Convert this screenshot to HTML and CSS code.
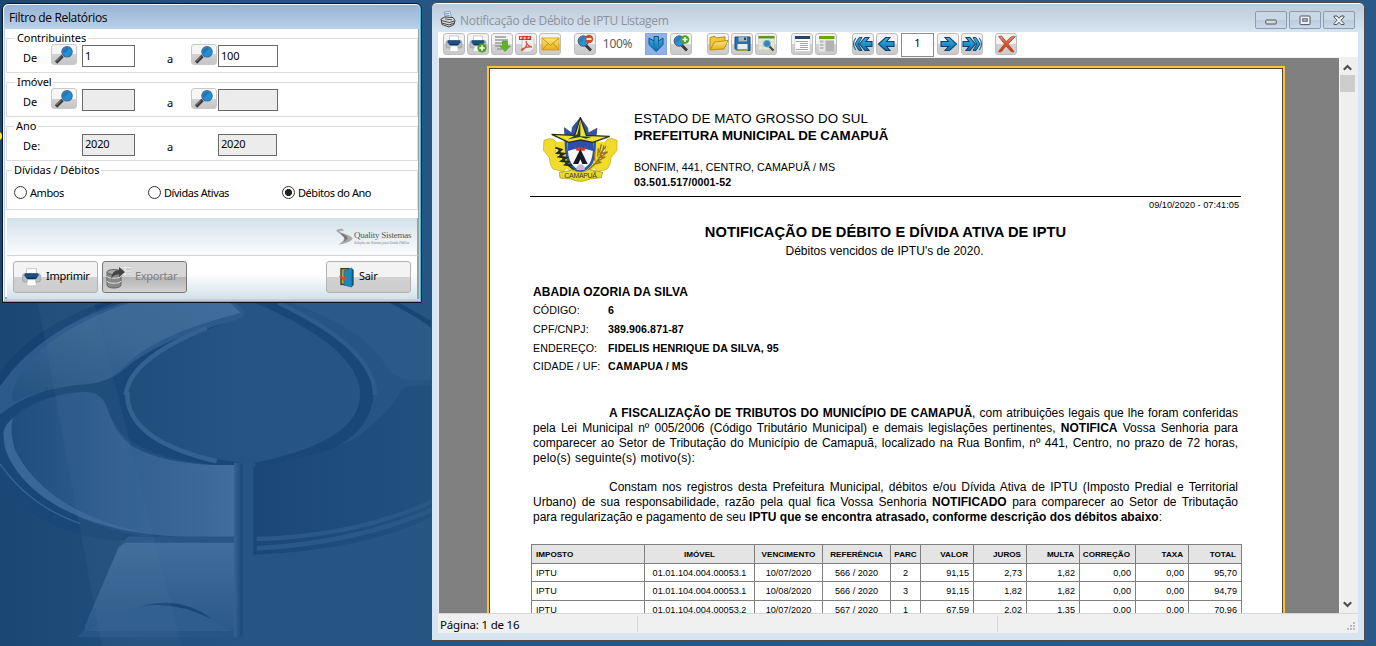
FILE: index.html
```html
<!DOCTYPE html>
<html lang="pt-BR">
<head>
<meta charset="utf-8">
<title>Notificação de Débito de IPTU Listagem</title>
<link rel="stylesheet" href="styles.css">
</head>
<body>
<svg class="defs" width="0" height="0" aria-hidden="true">
  <defs>
    <linearGradient id="gBlue" x1="0" y1="0" x2="0" y2="1"><stop offset="0" stop-color="#35b4ea"/><stop offset="1" stop-color="#0b6fae"/></linearGradient>
    <linearGradient id="gGold" x1="0" y1="0" x2="0" y2="1"><stop offset="0" stop-color="#ffe784"/><stop offset="1" stop-color="#e3ae12"/></linearGradient>
    <linearGradient id="gRed" x1="0" y1="0" x2="0" y2="1"><stop offset="0" stop-color="#dc8f7e"/><stop offset=".5" stop-color="#d9502f"/><stop offset="1" stop-color="#e33408"/></linearGradient>
    <symbol id="printer" viewBox="0 0 22 22">
      <path d="M6.500 3h9v6h-9z" fill="#fff" stroke="#b4b9c0" stroke-width=".7"/>
      <path d="M3 9q0-1.500 2-1.500h12q2 0 2 1.500v4.500q0 1.500-2 1.500H5q-2 0-2-1.500z" fill="#b9bec5" stroke="#8f949b" stroke-width=".6"/>
      <path d="M5 7.200h12l.5 2-2 2.800h-9l-2-2.800z" fill="#1d4f80"/>
      <path d="M6.500 11.200h9l-1 1.300h-7z" fill="#0f2c4c"/>
      <path d="M7.500 13h7l1 5.500h-9z" fill="#fff" stroke="#b4b9c0" stroke-width=".6"/>
    </symbol>
    <symbol id="lens" viewBox="0 0 26 22">
      <path d="M5 18.500l6.500-6.500" stroke="#3a3a3a" stroke-width="3.400"/>
      <path d="M5 17.500l5-5" stroke="#aaa" stroke-width=".8"/>
      <circle cx="16" cy="7.800" r="5.200" fill="#1f8fd6" stroke="#3d6f9c" stroke-width="1.200"/>
      <path d="M12.600 9.800a4.200 4.200 0 0 1 6-5.400z" fill="#2b5f98" opacity=".55"/>
    </symbol>
    <symbol id="zoomglass" viewBox="0 0 22 22">
      <path d="M11.500 12l5.500 5.500" stroke="#3a3a3a" stroke-width="3"/>
      <circle cx="9.300" cy="8" r="5.200" fill="#2796d8" stroke="#4a5a6c" stroke-width="1"/>
      <path d="M5.500 10.500A5 5 0 0 1 12 4.200z" fill="#2c6ea8" opacity=".6"/>
    </symbol>
    <symbol id="arrow" viewBox="0 0 22 22">
      <path d="M4 8.500h7.500L8 4.500h4.500L19.500 11l-7 6.500H8l3.500-4H4z" fill="url(#gBlue)" stroke="#173f66" stroke-width="1.100"/>
    </symbol>
    <symbol id="arrow2" viewBox="0 0 22 22">
      <path d="M2 8.500h6l-3-4h4L14.500 11 9 17.500H5l3-4H2z" fill="url(#gBlue)" stroke="#173f66" stroke-width="1.100"/>
      <path d="M12 4.500h3L19 11l-4 6.500h-3L15.800 11z" fill="url(#gBlue)" stroke="#173f66" stroke-width=".9"/>
      <path d="M18.300 5q4.400 6 0 12" fill="none" stroke="#1c6da8" stroke-width="1.200"/>
    </symbol>
  </defs>
</svg>

<svg class="wallpaper" viewBox="0 0 1376 646" aria-hidden="true">
  <defs>
    <linearGradient id="wBase"><stop offset="0" stop-color="#1a4773"/><stop offset=".18" stop-color="#265583"/><stop offset="1" stop-color="#285989"/></linearGradient>
    <linearGradient id="wTop" x1="0" y1="1" x2="1" y2="0"><stop offset="0" stop-color="#24527f"/><stop offset=".55" stop-color="#3a6793"/><stop offset="1" stop-color="#406d9b"/></linearGradient>
    <linearGradient id="wLow"><stop offset="0" stop-color="#1f4d7b"/><stop offset=".5" stop-color="#315f8e"/><stop offset="1" stop-color="#406d9b"/></linearGradient>
    <linearGradient id="wFoot" x1="0" y1="0" x2="0" y2="1"><stop offset="0" stop-color="#406d9b"/><stop offset="1" stop-color="#2c5a88"/></linearGradient>
    <linearGradient id="wRight"><stop offset="0" stop-color="#1a4776"/><stop offset="1" stop-color="#225180"/></linearGradient>
    <linearGradient id="wBar"><stop offset="0" stop-color="#356392"/><stop offset="1" stop-color="#1a4776"/></linearGradient>
  </defs>
  <rect width="1376" height="646" fill="url(#wBase)"/>
  <g transform="translate(0 300) scale(.33333)">
    <path d="M0 220Q90 80 330 0H360Q110 100 0 262z" fill="#164270"/>
    <path d="M0 258Q120 85 368 8H700Q735 20 733 44Q725 58 660 75C520 115 440 150 370 210Q320 250 270 256Q120 268 40 325Q15 342 0 342z" fill="#2c5b89"/>
    <path d="M36 290C50 180 200 70 390 8H690L722 38C560 80 440 130 378 195Q330 243 275 250Q130 260 50 303Q35 308 36 290z" fill="url(#wTop)"/>
    <path d="M0 344Q100 260 270 252Q330 245 375 207C450 140 560 100 680 68Q382 170 382 290Q390 450 715 486L705 498Q440 490 350 385Q325 340 318 315Q305 275 255 275Q120 280 20 355Q-10 395 25 465C100 620 300 700 470 712H710V722H380Q150 720 0 555z" fill="#1a4876"/>
    <path d="M10 400Q15 370 40 352Q130 280 255 276Q303 276 320 320Q345 400 395 437Q500 500 710 495V710H560C300 705 60 600 10 430z" fill="url(#wLow)"/>
    <path d="M10 400Q12 375 42 352Q25 380 45 450C120 600 300 680 480 704C260 690 60 590 14 440z" fill="#396796"/>
    <path d="M0 492Q90 620 240 670" fill="none" stroke="#356491" stroke-width="4"/>
    <path d="M378 285Q385 180 620 83" fill="none" stroke="#34628f" stroke-width="14"/>
    <path d="M382 275Q375 420 650 484" fill="none" stroke="#34628f" stroke-width="14"/>
    <path d="M765 8Q1082 145 1080 285Q1078 425 765 488L770 508C1000 480 1110 400 1120 290Q1130 150 850 8z" fill="#1a4876"/>
    <path d="M835 8Q1125 145 1125 285" fill="none" stroke="#2e5d8b" stroke-width="13"/>
    <path d="M870 8Q1080 80 1150 185Q1180 240 1240 240H1296V85Q1240 40 1170 8z" fill="#2b5a88"/>
    <path d="M1195 8Q1250 35 1296 65V85Q1250 48 1168 8z" fill="#194673"/>
    <path d="M760 500Q1030 460 1110 380Q1180 320 1200 275Q1220 250 1296 258V650Q1100 750 760 764z" fill="url(#wRight)"/>
    <path d="M770 717Q1060 710 1296 605" fill="none" stroke="#2a5986" stroke-width="13"/>
    <path d="M770 745Q1060 730 1296 630" fill="none" stroke="#2a5986" stroke-width="14"/>
    <path d="M260 975Q250 998 230 1012H728V490H705V710H385L355 740z" fill="#285684"/>
    <path d="M388 728H702V990L690 993C600 920 530 900 440 915Q370 930 262 993Q250 990 258 970L355 745Q368 728 388 728z" fill="url(#wFoot)"/>
    <path d="M262 993C380 900 540 870 690 993z" fill="#2f5e8c"/>
    <path d="M420 920Q540 885 635 957Q520 900 420 920z" fill="#1a4774"/>
    <path d="M702 488H720Q728 490 728 500V1000Q728 1010 718 1012H702z" fill="url(#wBar)"/>
    <path d="M112 0L305 1038H545L280 0z" fill="#4f7ca8" opacity=".12"/>
  </g>
</svg>
<span class="edge-mark"></span>

<section class="dialog">
  <header class="dialog-title">Filtro de Relatórios</header>
  <div class="dialog-body">
    <div class="group">
      <h3>Contribuintes</h3>
      <div class="range"><span>De</span><button class="seek"><svg><use href="#lens"/></svg></button><div class="field">1</div><span class="to">a</span><button class="seek"><svg><use href="#lens"/></svg></button><div class="field">100</div></div>
    </div>
    <div class="group">
      <h3>Imóvel</h3>
      <div class="range"><span>De</span><button class="seek"><svg><use href="#lens"/></svg></button><div class="field off"></div><span class="to">a</span><button class="seek"><svg><use href="#lens"/></svg></button><div class="field off"></div></div>
    </div>
    <div class="group year">
      <h3>Ano</h3>
      <div class="range"><span>De:</span><i></i><div class="field off">2020</div><span class="to">a</span><i></i><div class="field off">2020</div></div>
    </div>
    <div class="group kind">
      <h3>Dívidas / Débitos</h3>
      <div class="radios"><label><i></i>Ambos</label><label><i></i>Dívidas Ativas</label><label><i class="on"></i>Débitos do Ano</label></div>
    </div>
    <div class="brand-strip">
      <svg class="swoosh" viewBox="0 0 54 50"><path d="M3 8Q10 0 22 2L28 9Q14 6 14 12Q50 22 53 30Q52 38 28 46L10 50Q30 36 27 29Q22 22 3 8z" fill="#aaa"/><path d="M14 12Q40 22 38 30Q36 36 24 42Q32 33 27 27Q20 20 14 12z" fill="#777"/></svg>
      <div class="brand"><b>Quality Sistemas</b><small>Soluções em Sistemas para Gestão Pública</small></div>
    </div>
    <div class="actions">
      <button class="action"><svg viewBox="1.500 1.500 19 19"><use href="#printer" width="22" height="22"/></svg>Imprimir</button>
      <button class="action disabled"><svg class="db" viewBox="0 0 26 24"><path d="M1 7v13c0 4 14 4 14 0V7z" fill="#888" stroke="#666"/><ellipse cx="8" cy="7" rx="7" ry="2.500" fill="#aaa" stroke="#666"/><path d="M1 11c0 3 14 3 14 0M1 16c0 3 14 3 14 0" fill="none" stroke="#ddd"/><path d="M15 1h10v10H15z" fill="#ccc"/><path d="M15 2.500h10M15 6h10M15 9h10M19 1v10" stroke="#eee"/><path d="M5 14Q6 5 13 5V2l6 5-6 5V9Q8 9 5 14z" fill="#444"/></svg>Exportar</button>
      <button class="action exit"><svg viewBox="0 0 18 22"><path d="M3 1h10v18H3z" fill="#46402b"/><path d="M4.500 2.500h6v15h-6z" fill="#b9a03d"/><path d="M7 4l8-3v20l-8-2z" fill="#1b87bd" stroke="#0d5c88" stroke-width=".6"/><path d="M15 1.500v19l2-1.500V3z" fill="#0c5276"/><path d="M1 9l6 2V9l3 3.500L6 15v-1.500z" fill="#e8471a"/></svg>Sair</button>
    </div>
  </div>
</section>

<section class="report">
  <header class="report-title">
    <svg class="app-icon" viewBox="0 0 16 17"><path d="M4 1l6-.5 1.500 6-6 .5z" fill="#dfeaf8" stroke="#6f8fb4" stroke-width=".7"/><path d="M5 3l4-.4M5.500 5l4-.4" stroke="#3f73b4" stroke-width=".8"/><path d="M1 8l4-2 8 .5 2 3-1 4-5 2.500-7-2.500z" fill="#d9d9d9" stroke="#333" stroke-width=".9"/><path d="M1.500 9.500l8 2 5-1.500M2 12l7 2 5-1.800" fill="none" stroke="#333" stroke-width=".9"/><path d="M5 8l7 .8" stroke="#555"/></svg>
    <h1>Notificação de Débito de IPTU Listagem</h1>
    <div class="controls">
      <button><svg viewBox="0 0 12 11"><rect x=".8" y="5" width="10.400" height="4" rx=".8" fill="#dcd8d8" stroke="#4d5563"/></svg></button>
      <button><svg viewBox="0 0 12 11"><rect x="1" y="1" width="10" height="8.600" rx=".8" fill="#f0f0f0" stroke="#4d5563"/><rect x="3.800" y="3.800" width="4.400" height="2.400" fill="#c8d2de" stroke="#4d5563"/></svg></button>
      <button><svg viewBox="0 0 12 11"><path d="M1 1h3l2 2.300L8 1h3v1L8 5.200 11 8.500v1H8L6 7.200 4 9.500H1v-1l3-3.300L1 2z" fill="#f0f0f0" stroke="#4d5563"/></svg></button>
    </div>
  </header>
  <nav class="toolbar">
    <div class="tools">
      <button><svg><use href="#printer"/></svg></button>
      <button><svg viewBox="0 0 22 22"><use href="#printer"/><circle cx="15" cy="15" r="4.600" fill="#4f9d1c"/><path d="M15 12.300v5.400M12.300 15h5.400" stroke="#fff" stroke-width="1.500"/></svg></button>
      <button><svg viewBox="0 0 22 22"><path d="M4 4h11M4 7h13M4 10h9M4 13h6M6 16h5" stroke="#999" stroke-width="1.500"/><path d="M11.500 8h5v5h3L14 18.500 8.800 13h2.700z" fill="#5bb527" stroke="#3d9110" stroke-width=".5"/></svg></button>
      <button><svg viewBox="0 0 22 22"><path d="M7 3h9l3 3v9l-4 4H7z" fill="#eee" stroke="#bbb" stroke-width=".6"/><rect x="4" y="3" width="12" height="4" fill="#d92b17"/><path d="M5.500 6V4.200h1.600v1H5.500M9 6V4.200q2 0 2 .9T9 6M13 6V4.200h2M13 5.200h1.500" stroke="#fff" stroke-width=".7" fill="none"/><path d="M11 8c2 4-1 8-4 9.500-2-1 4-4 10-3.500-3-.5-6-3-6-6z" fill="none" stroke="#d4523d" stroke-width="1.300"/></svg></button>
      <button><svg viewBox="0 0 22 22"><rect x="3" y="5" width="17" height="12" fill="url(#gGold)" stroke="#cf9d12" stroke-width=".8"/><path d="M3 5l8.500 7.500L20 5M3 17l6-6.500M20 17l-6-6.500" fill="none" stroke="#c98f0d"/></svg></button>
    </div>
    <div class="tools zoom">
      <button><svg viewBox="0 0 22 22"><use href="#zoomglass"/><circle cx="15" cy="6" r="4.200" fill="#d9442c"/><path d="M12.500 6h5" stroke="#fff" stroke-width="1.700"/></svg></button>
      <span class="percent">100%</span>
      <button class="active"><svg viewBox="0 0 22 22"><path d="M9 3.500h4.500V8L18 5v6.500L11.200 18.500 4 11.500V5l5 3z" fill="url(#gBlue)" stroke="#1c4a77"/><path d="M9 8v5M13.500 8v5" stroke="#1c4a77" stroke-width=".6"/></svg></button>
      <button><svg viewBox="0 0 22 22"><use href="#zoomglass"/><circle cx="15" cy="6.500" r="4.300" fill="#529f1c"/><path d="M15 4v5M12.500 6.500h5" stroke="#fff" stroke-width="1.500"/></svg></button>
    </div>
    <div class="tools files">
      <button><svg viewBox="0 0 22 22"><path d="M3 17V4.500l5-1.200L9.500 5 18 3.800V8" fill="#f0c93a" stroke="#b78c13"/><path d="M3 17l4.500-8 13.500-1.500-4 8.500z" fill="url(#gGold)" stroke="#bd9214"/></svg></button>
      <button><svg viewBox="0 0 22 22"><path d="M4 4h15v13.500H6l-2-2z" fill="#2672ae" stroke="#174c7c"/><path d="M7.500 4H16v4.500H7.500z" fill="#aab2ba"/><path d="M13 4.500h2V7h-2z" fill="#234a70"/><path d="M6.500 11h10v6.500h-10z" fill="#e8edf0"/><path d="M6.500 16h10v2h-10z" fill="#8ca72c"/></svg></button>
      <button><svg viewBox="0 0 22 22"><rect x="3.500" y="3" width="16" height="14" fill="#e5ead9" stroke="#c2c9b5" stroke-width=".5"/><path d="M3.500 3h16v2.500h-16z" fill="#62931b"/><path d="M3.500 9h16M3.500 13h16M8 5.500V17M14 5.500V17" stroke="#cdd3c3" stroke-width=".7"/><path d="M14 13l4.500 4.500" stroke="#444" stroke-width="2.200"/><circle cx="12" cy="10.700" r="3.400" fill="#1e8ec9" stroke="#8ba2b2"/></svg></button>
    </div>
    <div class="tools views">
      <button><svg viewBox="0 0 22 22"><rect x="4" y="3.500" width="15" height="15" fill="#fff" stroke="#c3c6ca" stroke-width=".6"/><path d="M4 3h15v3H4z" fill="#24466c"/><path d="M5 8.500h12M9 10.500h8M9 12.500h8M9 14.500h8M5 16.500h12" stroke="#999" stroke-width=".9"/></svg></button>
      <button><svg viewBox="0 0 22 22"><rect x="4" y="3.500" width="15" height="15" fill="#e6e6e6"/><path d="M4 3h15.500v3H4z" fill="#66a80c"/><path d="M10.500 7.500H19v11h-8.500z" fill="#b2b2b2"/><path d="M5 8.500h3.500M5 12h3.500M5 15h3.500" stroke="#bbb" stroke-width="1.800"/></svg></button>
    </div>
    <div class="tools pager">
      <button><svg class="flip"><use href="#arrow2"/></svg></button>
      <button><svg class="flip"><use href="#arrow"/></svg></button>
      <div class="page-no">1</div>
      <button><svg><use href="#arrow"/></svg></button>
      <button><svg><use href="#arrow2"/></svg></button>
    </div>
    <div class="tools close">
      <button><svg viewBox="0 0 22 22"><path d="M3.500 3.500l3-.5 4.700 5.500L16 4q2-1.300 4.500-.5L13 11l4.500 5.500L19 19l-3-.5-5-5.500-4.500 5.500q-2 .8-3 0L9.500 11z" fill="url(#gRed)" stroke="#9c3d25" stroke-width=".7"/></svg></button>
    </div>
  </nav>
  <div class="preview">
    <div class="viewport">
      <article class="sheet">
        <header class="letterhead">
          <svg class="arms" viewBox="39 36 225 195">
            <path d="M103 68l22 16 2-17 24-29 22 31 2 15 26-14-3 25H105z" fill="#2d54b0" stroke="#273a5e" stroke-width="2"/>
            <path d="M42 106q16-8 27-4l10 10q-6 24 4 38 8 18 28 38l-12 12-30-8q-10-12-11-34l-18-22z" fill="#f1dc2c" stroke="#c3a71c" stroke-width="2"/>
            <path d="M261 106q-16-8-27-4l-10 10q6 24-4 38-8 18-28 38l12 12 28-8q10-12 11-34l18-22z" fill="#f1dc2c" stroke="#c3a71c" stroke-width="2"/>
            <path d="M76 112l32-4q2 50 24 84l-12 8q-36-30-44-88zM226 112l-32-4q-2 50-24 84l12 8q36-30 44-88z" fill="#f1dc2c"/>
            <path d="M108 105h86q0 60-15 76-12 14-28 20-18-6-28-20-15-18-15-76z" fill="#f8f9fb" stroke="#2d54b0" stroke-width="8"/>
            <path d="M113 108h76v30q-38-14-76 0z" fill="#2a50ab"/>
            <path d="M134 124l8 7 4-7 5 7 5-7 4 7 8-7-4 13h-24z" fill="#de3a23"/>
            <path d="M151 132l22 45h-44z" fill="#171923"/>
            <path d="M151 163l7 16h-14z" fill="#fff"/>
            <path d="M140 185q12-14 24 0v10h-24z" fill="#bbc"/>
            <path d="M65 88l69 3 17-53 18 53 70 3-51 18-36-7-36 7z" fill="#efe331" stroke="#292d20" stroke-width="4"/>
            <path d="M151 48v46l35 1-18 6-17-5-37 7 28-15z" fill="#253e38"/>
            <path d="M86 131q10 40 45 63" fill="none" stroke="#222e1a" stroke-width="4"/>
            <path d="M76 128l18 6-12 10 20 2-14 9 21 3-14 10 20 2-9 9 20 2" fill="none" stroke="#222d19" stroke-width="6"/>
            <path d="M222 121q-6 42-48 75M228 124l-17 22 22-5-24 16 17-1-25 13 13 3-25 6M214 118l-6 25M205 130l-2 25M194 142v25" fill="none" stroke="#96741b" stroke-width="4"/>
            <path d="M88 202q30-4 38-8 26 14 52 0l40 8-4 16-34 4q-29 14-58 0l-32-3z" fill="#e9da2c" stroke="#9d8b1e" stroke-width="2"/>
            <text x="152" y="219" text-anchor="middle" textLength="98" font-family="Liberation Sans, sans-serif" font-size="21" fill="#3e381b">CAMAPUÃ</text>
          </svg>
          <div class="org">
            <p class="state">ESTADO DE MATO GROSSO DO SUL</p>
            <p class="city">PREFEITURA MUNICIPAL DE CAMAPUÃ</p>
            <p class="addr">BONFIM, 441, CENTRO, CAMAPUÃ / MS</p>
            <p class="cnpj">03.501.517/0001-52</p>
          </div>
        </header>
        <p class="stamp">09/10/2020 - 07:41:05</p>
        <h2>NOTIFICAÇÃO DE DÉBITO E DÍVIDA ATIVA DE IPTU</h2>
        <p class="subtitle">Débitos vencidos de IPTU's de 2020.</p>
        <div class="person">
          <p class="name">ABADIA OZORIA DA SILVA</p>
          <dl>
            <dt>CÓDIGO:</dt><dd>6</dd>
            <dt>CPF/CNPJ:</dt><dd>389.906.871-87</dd>
            <dt>ENDEREÇO:</dt><dd>FIDELIS HENRIQUE DA SILVA, 95</dd>
            <dt>CIDADE / UF:</dt><dd>CAMAPUA / MS</dd>
          </dl>
        </div>
        <div class="para">
          <p class="first"><b>A FISCALIZAÇÃO DE TRIBUTOS DO MUNICÍPIO DE CAMAPUÃ</b>, com atribuições legais que lhe foram conferidas</p>
          <p>pela Lei Municipal nº 005/2006 (Código Tributário Municipal) e demais legislações pertinentes, <b>NOTIFICA</b> Vossa Senhoria para</p>
          <p>comparecer ao Setor de Tributação do Município de Camapuã, localizado na Rua Bonfim, nº 441, Centro, no prazo de 72 horas,</p>
          <p class="short">pelo(s) seguinte(s) motivo(s):</p>
        </div>
        <div class="para">
          <p class="first">Constam nos registros desta Prefeitura Municipal, débitos e/ou Dívida Ativa de IPTU (Imposto Predial e Territorial</p>
          <p>Urbano) de sua responsabilidade, razão pela qual fica Vossa Senhoria <b>NOTIFICADO</b> para comparecer ao Setor de Tributação</p>
          <p class="final">para regularização e pagamento de seu <b>IPTU que se encontra atrasado, conforme descrição dos débitos abaixo</b>:</p>
        </div>
        <table>
          <colgroup><col class="c-tax"><col class="c-prop"><col class="c-date"><col class="c-date"><col class="c-parc"><col class="c-num"><col class="c-num"><col class="c-num"><col class="c-corr"><col class="c-num"><col class="c-num"></colgroup>
          <thead><tr><th>IMPOSTO</th><th>IMÓVEL</th><th>VENCIMENTO</th><th>REFERÊNCIA</th><th>PARC</th><th>VALOR</th><th>JUROS</th><th>MULTA</th><th>CORREÇÃO</th><th>TAXA</th><th>TOTAL</th></tr></thead>
          <tbody>
            <tr class="r1"><td>IPTU</td><td>01.01.104.004.00053.1</td><td>10/07/2020</td><td>566 / 2020</td><td>2</td><td>91,15</td><td>2,73</td><td>1,82</td><td>0,00</td><td>0,00</td><td>95,70</td></tr>
            <tr><td>IPTU</td><td>01.01.104.004.00053.1</td><td>10/08/2020</td><td>566 / 2020</td><td>3</td><td>91,15</td><td>1,82</td><td>1,82</td><td>0,00</td><td>0,00</td><td>94,79</td></tr>
            <tr><td>IPTU</td><td>01.01.104.004.00053.2</td><td>10/07/2020</td><td>567 / 2020</td><td>1</td><td>67,59</td><td>2,02</td><td>1,35</td><td>0,00</td><td>0,00</td><td>70,96</td></tr>
          </tbody>
        </table>
      </article>
    </div>
    <div class="scrollbar">
      <svg viewBox="0 0 8 6"><path d="M.7 5L4 1.700 7.300 5" fill="none" stroke="#505050" stroke-width="1.900"/></svg>
      <span class="thumb"></span>
      <svg viewBox="0 0 8 6"><path d="M.7 1L4 4.300 7.300 1" fill="none" stroke="#505050" stroke-width="1.900"/></svg>
    </div>
  </div>
  <footer class="status"><span>Página: 1 de 16</span><span></span><span></span>
    <svg class="grip" viewBox="0 0 8 8"><path d="M6 0h2v2H6zM3 3h2v2H3zM6 3h2v2H6zM0 6h2v2H0zM3 6h2v2H3zM6 6h2v2H6z" fill="#bbb"/></svg>
  </footer>
</section>
</body>
</html>
```

FILE: styles.css
```css
* { box-sizing: border-box; }
html, body { margin: 0; width: 1376px; height: 646px; overflow: hidden; }
body { position: relative; font: 11px "Noto Sans", sans-serif; color: #000; background: #265583; }
h1, h2, h3, p, dl, dd { margin: 0; font-weight: normal; }
button { padding: 0; font: inherit; }
svg { display: block; }
.defs { position: absolute; }
.wallpaper { position: absolute; left: 0; top: 0; width: 1376px; height: 646px; }
.edge-mark { position: absolute; left: -5px; top: 132px; width: 7px; height: 8px; border-radius: 4px; background: #ffee20; }

/* Filter dialog */
.dialog { position: absolute; left: 2px; top: 3px; width: 420px; height: 300px; border: 1px solid #0b1420; border-radius: 6px 6px 0 0; background: #b8d0ea; box-shadow: inset -1px -1px #35c4dc, inset 1px 1px #f2f8fd; overflow: hidden; padding: 1px 2px 2px; }
.dialog-title { height: 24px; margin: 0 -1px; padding-left: 5px; border-radius: 5px 5px 0 0; background: linear-gradient(#98b3d2, #b9d1ea); font: 12px/26px "Open Sans", sans-serif; letter-spacing: -.35px; }
.dialog-body { height: 270px; background: #fff; border-right: 1px solid #a0a0a0; border-bottom: 2px solid #a0a0a0; padding: 9px 0 0 1px; }
.group { width: 412px; height: 35px; border: 1px solid #dcdcdc; margin-bottom: 9px; }
.group h3 { width: max-content; height: 14px; margin: -8px 0 0 8px; padding: 0 2px; font-size: 11px; line-height: 14px; letter-spacing: -.1px; background: #fff; }
.range { display: grid; grid-template-columns: 28px 31px 85px 24px 27px 60px; padding-left: 16px; line-height: 26px; }
.to { padding-top: 1px; }
.seek { width: 26px; height: 21px; margin-top: -1px; border: 1px solid #c9c9c9; border-radius: 3px; background: linear-gradient(#f6f6f6 50%, #d2d2d2 50%, #c6c6c6); }
.seek svg { width: 26px; height: 22px; margin: -1px; }
.field { width: 53px; height: 22px; border: 1px solid #696969; background: #fff; padding-left: 2px; line-height: 19px; letter-spacing: -.2px; }
.field:last-child { width: 60px; }
.off { background: #ececec; }
.year h3 { margin-left: 7px; }
.year .range { padding-top: 1px; line-height: 24px; }
.year .field { line-height: 18px; }
.year .field:last-child { width: 59px; }
.kind { height: 40px; margin-bottom: 8px; }
.kind h3 { margin-left: 5px; }
.radios { display: grid; grid-template-columns: 134px 134px 1fr; padding: 9px 0 0 7px; }
.radios label { display: flex; align-items: center; gap: 3px; height: 13px; white-space: nowrap; letter-spacing: -.45px; }
.radios i { width: 13px; height: 13px; border: 1px solid #333; border-radius: 50%; background: #fff; }
.radios .on { background: radial-gradient(circle, #222 3.200px, #fff 3.900px); }
.brand-strip { display: flex; height: 38px; width: 412px; margin-left: 1px; border-bottom: 1px solid #d5d5d5; background: linear-gradient(#d2e1e9, #fbfcfd); border-right: 2px solid #a0a0a0; padding: 10px 5px 0 0; justify-content: flex-end; gap: 1px; }
.swoosh { width: 18px; height: 17px; }
.brand { width: 58px; padding-top: 2px; white-space: nowrap; color: #555; }
.brand b { display: block; font: 9px/11px "Liberation Serif", serif; letter-spacing: -.25px; }
.brand small { display: block; font: italic 3.200px/4px "Liberation Serif", serif; color: #777; }
.actions { display: flex; height: 43px; width: 412px; margin-left: 1px; padding: 5px 0 0 6px; gap: 4px; background: linear-gradient(#fff 40%, #d2e1e9); border-right: 2px solid #a0a0a0; }
.action { display: flex; align-items: center; width: 85px; height: 32px; border: 1px solid #b2b2b2; border-radius: 3px; background: linear-gradient(#f3f3f3 50%, #d2d2d2 50%, #ccc); padding: 0 0 3px 7px; gap: 4px; color: #000; letter-spacing: -.3px; }
.action svg { width: 21px; height: 21px; flex: none; margin-top: 3px; }
.disabled { border-color: #777; background: linear-gradient(#d6d6d6 50%, #b4b4b4 50%, #d2d2d2); color: #808080; padding-left: 3px; gap: 3px; }
.disabled svg.db { width: 26px; height: 24px; margin-top: 2px; }
.exit { margin-left: 135px; padding-left: 10px; }
.exit svg { width: 18px; }

/* Report window */
.report { position: absolute; left: 431px; top: 2px; width: 934px; height: 639px; border: 1px solid #4c4c4c; border-radius: 6px 6px 0 0; background: #d7e4f2; box-shadow: inset 0 1px #fff; padding: 0 6px; }
.report-title { display: flex; align-items: flex-start; height: 28px; margin: 1px -6px 0; padding: 7px 9px 0 8px; border-radius: 5px 5px 0 0; background: linear-gradient(#bdcbd9, #d7e4f2); }
.app-icon { width: 16px; height: 17px; }
.report-title h1 { flex: 1; margin-left: 4px; font: 12px/19px "Open Sans", sans-serif; color: #8e9298; letter-spacing: -.3px; }
.controls { display: flex; gap: 2px; }
.controls button { display: grid; place-items: center; width: 32px; height: 18px; border: 1px solid #8b9bb3; border-radius: 2px; background: linear-gradient(#cad7e5 50%, #bccbdd 50%, #cbd8e8); }
.controls svg { width: 12px; height: 11px; }
.toolbar { display: flex; height: 26px; padding: 1px 0 0 5px; background: #fff; border-bottom: 1px solid #f0f0f0; }
.tools { display: flex; gap: 2px; }
.tools button { width: 22px; height: 22px; border: 1px solid #bdbdbd; border-radius: 3px; background: linear-gradient(#f3f3f3 50%, #d3d3d3 50%, #cbcbcb); }
.tools svg { width: 22px; height: 22px; margin: -1px; }
.tools .flip { transform: scaleX(-1); }
.zoom { margin-left: 13px; gap: 3px; }
.percent { width: 49px; margin: 0 -3px; text-align: center; padding-right: 6px; font: 12px/22px "Noto Sans", sans-serif; color: #5c5c5c; letter-spacing: -.3px; }
.tools .active { border-color: #80a6df; background: #8fb2e9; border-radius: 0; }
.files { margin-left: 15px; }
.views { margin-left: 14px; }
.pager { margin-left: 15px; }
.page-no { width: 33px; height: 24px; margin: 0 1px; border: 1px solid #8c8c8c; text-align: center; line-height: 18px; }
.close { margin-left: 12px; }
.preview { display: flex; height: 555px; background: #efefef; }
.viewport { width: 902px; height: 555px; padding: 8px 0 0 48px; overflow: hidden; background: #808080; border-left: 1px solid #e8eef4; border-right: 1px solid #f8f8f8; }
.sheet { width: 798px; height: 900px; padding: 37px 41px 0 41px; border: 2px solid #ffc235; background: #fff; box-shadow: inset 0 0 0 1px #4c4433; color: #000; font: 12px "Liberation Sans", Arial, sans-serif; }
.scrollbar { display: flex; flex-direction: column; width: 15px; }
.scrollbar svg { width: 9px; height: 7px; margin: 6px 0 0 3px; }
.thumb { height: 17px; margin-top: 4px; background: #cdcdcd; }
.scrollbar .thumb + svg { margin-top: auto; margin-bottom: 5px; }
.status { display: flex; height: 20px; background: #f0f0f0; border-top: 1px solid #d7d7d7; font-size: 11.500px; letter-spacing: -.2px; }
.status span { width: 360px; margin: 2px 0 1px; line-height: 18px; border-left: 1px solid #d7d7d7; }
.status span:first-child { width: 199px; border: 0; padding-left: 2px; }
.grip { width: 8px; height: 8px; margin: 8px 1px 0 -10px; }

.letterhead { display: flex; height: 92px; width: 711px; border-bottom: 1px solid #000; }
.arms { width: 75px; height: 65px; margin: 12px 15px 0 13px; }
.org { padding-left: 1px; }
.org p { white-space: nowrap; }
.org .state { margin-top: 5px; font-size: 13.330px; line-height: 17px; letter-spacing: .05px; }
.org .city { font-size: 13.330px; line-height: 17px; font-weight: bold; letter-spacing: -.03px; }
.org .addr { margin-top: 16px; font-size: 10.670px; line-height: 15px; letter-spacing: .05px; }
.org .cnpj { font-size: 10.670px; line-height: 15px; font-weight: bold; letter-spacing: .1px; }
.stamp { width: 709px; text-align: right; font-size: 9.200px; line-height: 15px; margin-top: 1px; }
.sheet h2 { width: 711px; text-align: center; font-size: 14.670px; line-height: 20px; font-weight: bold; margin-top: 9px; letter-spacing: .05px; }
.subtitle { width: 709px; text-align: center; line-height: 18px; letter-spacing: .03px; }
.person { margin: 22px 0 0 3px; }
.person .name { font-weight: bold; line-height: 20px; letter-spacing: .1px; white-space: nowrap; }
.person dl { display: grid; grid-template-columns: 75px 1fr; grid-template-rows: 19px 19px 18px 18px; margin-top: -1px; font-size: 10.670px; line-height: 18px; }
.person dt { letter-spacing: .08px; white-space: nowrap; }
.person dd { font-weight: bold; letter-spacing: .08px; white-space: nowrap; }
.para { width: 705px; margin: 31px 0 0 3px; }
.para + .para { margin-top: 14px; }
.para p { line-height: 15px; text-align: justify; text-align-last: justify; white-space: nowrap; }
.para .first { padding-left: 76px; }
.para .short { width: 162px; letter-spacing: .18px; }
.para .final { width: 629px; }
.sheet table { width: 711px; margin: 19px 0 0 1px; table-layout: fixed; border-spacing: 0; border-left: 1px solid #808080; border-top: 1px solid #808080; font-size: 9.150px; }
.c-tax { width: 113px; } .c-prop { width: 110px; } .c-date { width: 68px; } .c-parc { width: 30px; } .c-num { width: 53px; } .c-corr { width: 56px; }
.sheet th, .sheet td { height: 19px; padding: 0 4px 0 0; border-right: 1px solid #808080; border-bottom: 1px solid #808080; text-align: right; white-space: nowrap; line-height: 17px; }
.sheet th { background: #e4e4e4; font-size: 8.100px; padding-right: 5px; }
.sheet tr > :nth-child(-n+5) { text-align: center; padding: 0; }
.sheet tr > :first-child { text-align: left; padding-left: 4px; }
.sheet .r1 td { height: 18px; padding-top: 1px; line-height: 16px; }
```
